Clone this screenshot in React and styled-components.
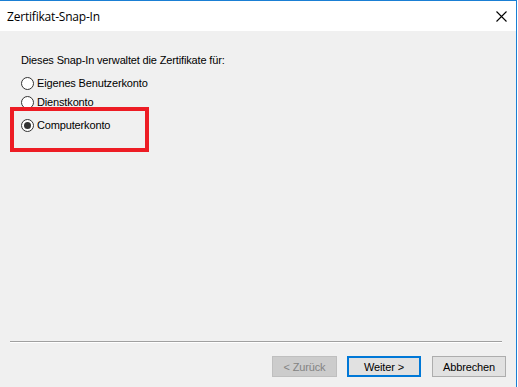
import React from "react";
import styled, { createGlobalStyle } from "styled-components";

const Global = createGlobalStyle`
  html, body { margin: 0; padding: 0; background: #ffffff; }
  body { font-family: "Liberation Sans", Arial, sans-serif; }
`;

const Window = styled.div`
  position: relative;
  box-sizing: border-box;
  width: 517px;
  height: 387px;
  border-top: 1px solid #1a7fd4;
  border-right: 1px solid #1a7fd4;
  display: flex;
  flex-direction: column;
  background: #f0f0f0;
`;

const TitleBar = styled.div`
  height: 30px;
  background: #ffffff;
  display: flex;
  align-items: center;
  justify-content: space-between;
  padding: 1px 9px 0 7px;
  box-sizing: border-box;
  font-family: "Segoe UI", "Open Sans", sans-serif;
  font-size: 12px;
  letter-spacing: -0.2px;
  color: #000;
`;

const Body = styled.div`
  position: relative;
  flex: 1;
  display: flex;
  flex-direction: column;
  padding: 22px 0 0 21px;
  font-size: 11px;
  letter-spacing: -0.15px;
  color: #000;
`;

const Intro = styled.div`
  height: 14px;
  line-height: 14px;
  margin-bottom: 9px;
`;

const RadioRow = styled.label`
  display: flex;
  align-items: center;
  gap: 3px;
  height: 14px;
  line-height: 14px;
  margin-bottom: ${(p) => p.$gap}px;
`;

const Circle = styled.span`
  box-sizing: border-box;
  width: 13px;
  height: 13px;
  border-radius: 50%;
  border: 1px solid #333;
  background: #fff;
  display: flex;
  align-items: center;
  justify-content: center;
  &::after {
    content: "";
    width: 7px;
    height: 7px;
    border-radius: 50%;
    background: #333;
    display: ${(p) => (p.$checked ? "block" : "none")};
  }
`;

const Highlight = styled.div`
  position: absolute;
  left: 10px;
  top: 76px;
  width: 139px;
  height: 45px;
  box-sizing: border-box;
  border: 4px solid #ed1c24;
  pointer-events: none;
`;

const Spacer = styled.div`
  flex: 1;
`;

const Separator = styled.div`
  margin: 0 14px 0 10px;
  height: 1px;
  background: #a0a0a0;
  border-bottom: 1px solid #ffffff;
`;

const Footer = styled.div`
  display: flex;
  justify-content: flex-end;
  padding: 13px 10px 10px 0;
`;

const Button = styled.button`
  box-sizing: border-box;
  width: ${(p) => p.$w}px;
  height: 21px;
  margin-left: ${(p) => p.$ml || 0}px;
  font-family: "Liberation Sans", Arial, sans-serif;
  font-size: 11px;
  letter-spacing: -0.15px;
  padding: 0;
  background: ${(p) => (p.disabled ? "#cccccc" : "#e1e1e1")};
  color: ${(p) => (p.disabled ? "#838383" : "#000")};
  border: ${(p) =>
    p.$default ? "2px solid #0078d7" : p.disabled ? "1px solid #bfbfbf" : "1px solid #adadad"};
`;

export default function App() {
  return (
    <>
      <Global />
      <Window>
        <TitleBar>
          <span>Zertifikat-Snap-In</span>
          <svg width="11" height="11" viewBox="0 0 11 11">
            <path d="M0.5 0.5 L10.5 10.5 M10.5 0.5 L0.5 10.5" stroke="#000" strokeWidth="1.1" fill="none" />
          </svg>
        </TitleBar>
        <Body>
          <Intro>Dieses Snap-In verwaltet die Zertifikate für:</Intro>
          <RadioRow $gap={5}>
            <Circle />
            Eigenes Benutzerkonto
          </RadioRow>
          <RadioRow $gap={9}>
            <Circle />
            Dienstkonto
          </RadioRow>
          <RadioRow $gap={0}>
            <Circle $checked />
            Computerkonto
          </RadioRow>
          <Highlight />
          <Spacer />
        </Body>
        <Separator />
        <Footer>
          <Button disabled $w={65}>&lt; Zurück</Button>
          <Button $default $w={74} $ml={10}>Weiter &gt;</Button>
          <Button $w={74} $ml={11}>Abbrechen</Button>
        </Footer>
      </Window>
    </>
  );
}
